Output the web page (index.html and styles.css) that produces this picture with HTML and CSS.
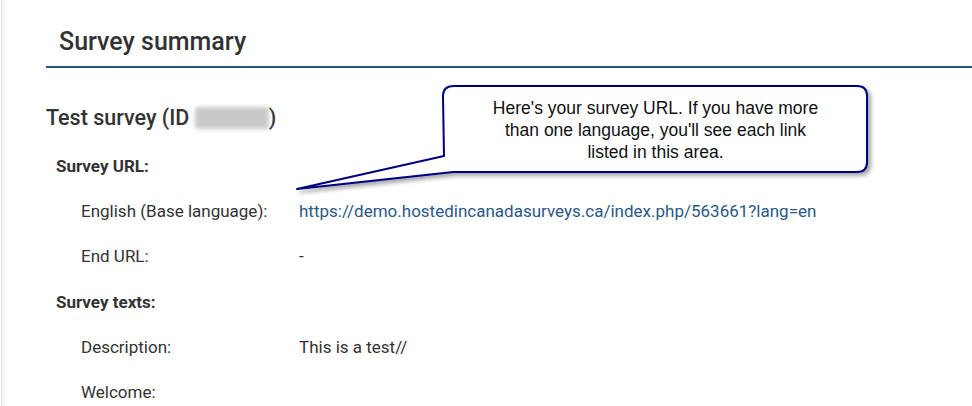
FILE: index.html
```html
<!DOCTYPE html>
<html lang="en">
<head>
    <meta charset="UTF-8">
    <meta name="viewport" content="width=device-width, initial-scale=1.0">
    <title>Survey summary</title>
    <link rel="stylesheet" href="styles.css">
</head>
<body>

<div class="page">
    <div class="rail"></div>

    <div class="main">
        <h1 class="title">Survey summary</h1>

        <h2 class="survey-name">Test survey (ID <span class="blurred"></span>)</h2>

        <div class="group">Survey URL:</div>
        <div class="row">
            <span class="label">English (Base language):</span>
            <a class="value link" href="#">https://demo.hostedincanadasurveys.ca/index.php/563661?lang=en</a>
        </div>
        <div class="row">
            <span class="label">End URL:</span>
            <span class="value">-</span>
        </div>

        <div class="group">Survey texts:</div>
        <div class="row">
            <span class="label">Description:</span>
            <span class="value">This is a test//</span>
        </div>
        <div class="row">
            <span class="label">Welcome:</span>
            <span class="value"></span>
        </div>
    </div>

    <!-- annotation bubble over the page -->
    <div class="callout">
        <svg class="callout-shape" width="972" height="406" viewBox="0 0 972 406">
            <defs>
                <filter id="shadow" x="-10%" y="-20%" width="130%" height="160%">
                    <feDropShadow dx="3" dy="3" stdDeviation="2" flood-color="#000" flood-opacity="0.35"/>
                </filter>
            </defs>
            <path d="M454 86 L857 86 Q867 86 867 96 L867 162 Q867 172 857 172 L453 172 L297 189 L444 156 L443 96 Q443 86 454 86 Z"
                  fill="#fff" stroke="#00007f" stroke-width="2" stroke-linejoin="round" filter="url(#shadow)"/>
        </svg>
        <div class="callout-text">Here's your survey URL. If you have more<br>than one language, you'll see each link<br>listed in this area.</div>
    </div>
</div>

</body>
</html>
```

FILE: styles.css
```css
:root {
    --text: #333333;
    --brand: #285480;
    --link: #2b5886;
    --rail: #e3e3e3;
}

body {
    margin: 0;
    font-family: 'Roboto', 'Liberation Sans', sans-serif;
    color: var(--text);
    background: #fff;
}

.page {
    position: relative;
    display: flex;
    height: 406px;
    overflow: hidden;
}

.rail {
    width: 6px;
    margin-left: 1px;
    border-left: 1px solid var(--rail);
    background: linear-gradient(to right, #f4f4f4, #fff);
}

.main {
    flex: 1;
    padding-left: 38px;
}

.title {
    margin: 0;
    padding: 28px 13px 10px;
    font-size: 25px;
    line-height: 28px;
    font-weight: 500;
    border-bottom: 2px solid var(--brand);
}

.survey-name {
    margin: 28px 0 0;
    font-size: 21.5px;
    line-height: 44px;
    font-weight: 500;
}

.blurred {
    display: inline-block;
    width: 74px;
    height: 22px;
    vertical-align: -4px;
    background: #c9c9c9;
    filter: blur(2px);
    border-radius: 3px;
}

.group {
    padding-left: 10px;
    font-size: 17px;
    font-weight: 700;
    line-height: 45px;
}

.survey-name + .group {
    margin-top: 4px;
}

.row + .group {
    margin-top: 1px;
}

.row {
    display: flex;
    padding-left: 35px;
    font-size: 17px;
    line-height: 45px;
}

.label {
    width: 218px;
    flex-shrink: 0;
}

.link {
    color: var(--link);
    text-decoration: none;
}

.callout {
    position: absolute;
    left: 0;
    top: 0;
    width: 972px;
    height: 406px;
    pointer-events: none;
}

.callout-shape {
    display: block;
}

.callout-text {
    position: absolute;
    left: 444px;
    top: 97px;
    width: 423px;
    text-align: center;
    font-family: 'Liberation Sans', Arial, sans-serif;
    font-size: 17.5px;
    line-height: 22px;
    color: #111;
}
```
